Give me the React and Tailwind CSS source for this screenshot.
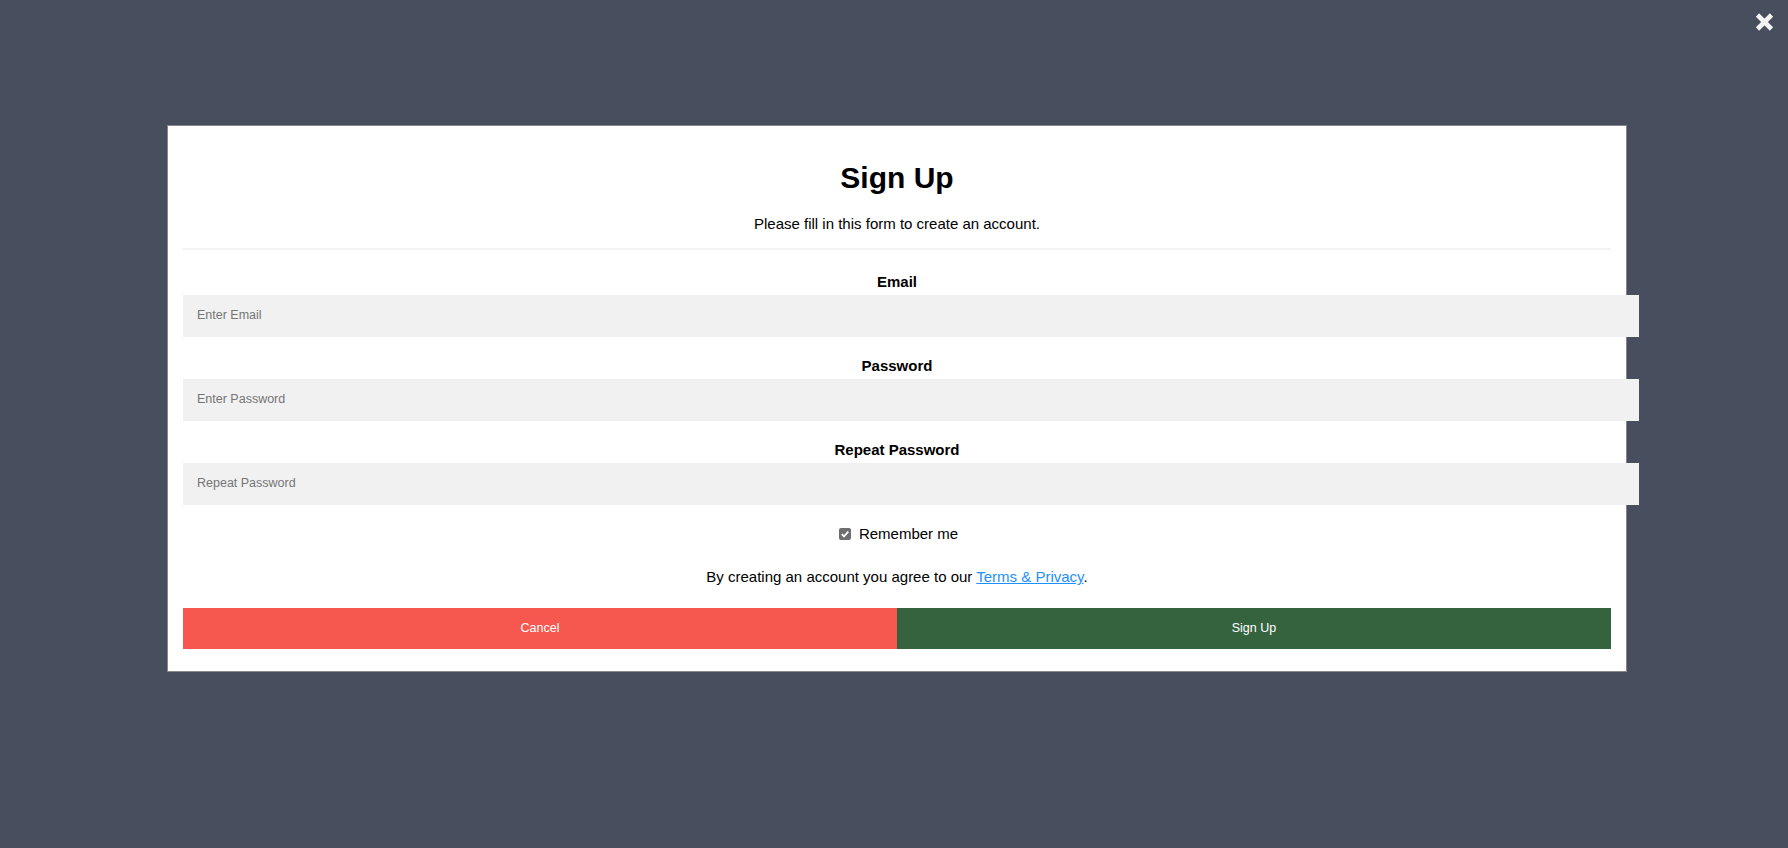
import React from 'react';

const font = { fontFamily: '"Liberation Sans", Arial, sans-serif' };

const Field = ({ label, placeholder, type = 'text' }) => (
  <>
    <label className="block text-[15px] leading-[17px] font-bold text-black">{label}</label>
    <input
      type={type}
      placeholder={placeholder}
      className="block mt-[4.5px] mb-[20.6px] w-[1456px] h-[42px] px-[14px] pb-[2px] bg-[#f1f1f1] border-0 outline-none text-[12.5px] text-left placeholder:text-[#757575]"
      style={font}
    />
  </>
);

const App = () => {
  return (
    <div className="relative w-full h-[848px] overflow-hidden bg-[#474e5d] pt-[125px]" style={font}>
      {/* Close */}
      <button className="absolute top-[13px] left-[1755px] w-[19px] h-[18px]" aria-label="Close">
        <svg width="19" height="18" viewBox="0 0 19 18">
          <path d="M2.5 2 L16.5 16 M16.5 2 L2.5 16" stroke="#f4f4f4" strokeWidth="4.6" />
        </svg>
      </button>

      {/* Modal */}
      <div className="ml-[167px] w-[1460px] bg-white border border-[#888] px-[15px] pt-[35px] pb-[22px] text-center">
        <h1 className="text-[30px] leading-[34px] font-bold text-black">Sign Up</h1>
        <p className="mt-[20px] text-[15px] leading-[17px] text-black">Please fill in this form to create an account.</p>
        <hr className="mt-[16px] mb-[23px] h-[2px] border-0 bg-[#f1f1f1]" />

        <Field label="Email" placeholder="Enter Email" />
        <Field label="Password" placeholder="Enter Password" type="password" />
        <Field label="Repeat Password" placeholder="Repeat Password" type="password" />

        <label className="mt-[3px] flex items-center justify-center text-[15px] leading-[17px] text-black">
          <span className="ml-[3px] mr-[8px] w-[12px] h-[12px] rounded-[2px] bg-[#6e6e6e] flex items-center justify-center">
            <svg width="10" height="10" viewBox="0 0 10 10">
              <path d="M1.8 5.2 L4 7.4 L8.3 2.6" stroke="white" strokeWidth="1.7" fill="none" />
            </svg>
          </span>
          Remember me
        </label>

        <p className="mt-[26px] text-[15px] leading-[17px] text-black">
          By creating an account you agree to our{' '}
          <a href="#" className="text-[#1e90ff] underline">Terms &amp; Privacy</a>.
        </p>

        <div className="mt-[23px] flex">
          <button className="flex-1 h-[41px] bg-[#f6574e] text-white text-[12.5px]" style={font}>Cancel</button>
          <button className="flex-1 h-[41px] bg-[#35633e] text-white text-[12.5px]" style={font}>Sign Up</button>
        </div>
      </div>
    </div>
  );
};

export default App;
